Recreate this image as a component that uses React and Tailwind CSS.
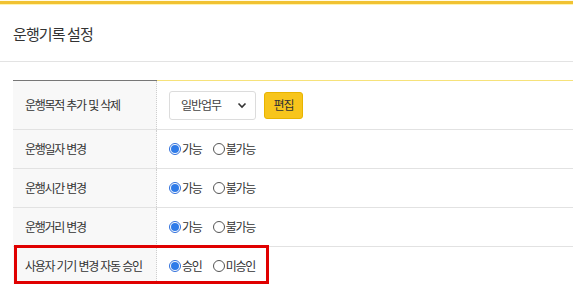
import React, { useState } from "react";

const font = "font-['Noto_Sans_CJK_KR','Noto_Sans',sans-serif]";

function Radio({ checked, label, onClick }) {
  return (
    <label onClick={onClick} className="flex items-center cursor-pointer">
      {checked ? (
        <span className="w-[12px] h-[12px] rounded-full border border-[#2f6fdb] flex items-center justify-center">
          <span className="w-[8px] h-[8px] rounded-full bg-[#2f7be8]" />
        </span>
      ) : (
        <span className="w-[12px] h-[12px] rounded-full border border-[#555]" />
      )}
      <span className="ml-[1px] text-[12px] tracking-[-1.2px] text-[#333] leading-none">{label}</span>
    </label>
  );
}

function RadioPair({ options }) {
  const [value, setValue] = useState(0);
  return (
    <div className="flex items-center gap-[11px]">
      {options.map((o, i) => (
        <Radio key={o} label={o} checked={value === i} onClick={() => setValue(i)} />
      ))}
    </div>
  );
}

function Row({ label, children, tall }) {
  return (
    <div className={"flex border-b border-[#e2e2e2] " + (tall ? "h-[49px]" : "h-[39px]")}>
      <div className="w-[144px] bg-[#f8f8f8] flex items-center pl-[12px] text-[12px] tracking-[-1.3px] [word-spacing:1px] whitespace-nowrap text-[#333] border-r border-dotted border-[#cfcfcf]">
        {label}
      </div>
      <div className="flex-1 flex items-center pl-[12px]">{children}</div>
    </div>
  );
}

export default function App() {
  return (
    <div className={"w-[573px] h-[284px] overflow-hidden bg-white relative " + font}>
      {/* top bar */}
      <div className="h-[1px] bg-[#fffbe8]" />
      <div className="h-[3px] bg-[#f1c232]" />
      <div className="h-[1px] bg-[#fff4b0]" />

      {/* title */}
      <div className="h-[57px] border-b border-[#e3e3e3] flex items-center pl-[13px] pt-[2px]">
        <span className="text-[15px] tracking-[-0.9px] text-[#333]">운행기록 설정</span>
      </div>

      {/* table */}
      <div className="pt-[18px] pl-[13px]">
        <div className="flex h-[1px]">
          <div className="w-[144px] bg-[#777]" />
          <div className="flex-1 bg-[#f6e27a]" />
        </div>
        <Row label="운행목적 추가 및 삭제" tall>
          <div className="w-[87px] h-[29px] border border-[#dcdcdc] rounded-[3px] flex items-center justify-between pl-[11px] pr-[8px] text-[12px] tracking-[-1px] text-[#444]">
            <span>일반업무</span>
            <svg width="10" height="10" viewBox="0 0 10 10">
              <path d="M1.5 3.5 L5 7 L8.5 3.5" fill="none" stroke="#333" strokeWidth="1.6" />
            </svg>
          </div>
          <button className="ml-[8px] w-[39px] h-[27px] bg-[#f7c51c] border border-[#e8b400] rounded-[3px] text-[12px] tracking-[-1px] text-[#333]">
            편집
          </button>
        </Row>
        <Row label="운행일자 변경">
          <RadioPair options={["가능", "불가능"]} />
        </Row>
        <Row label="운행시간 변경">
          <RadioPair options={["가능", "불가능"]} />
        </Row>
        <Row label="운행거리 변경">
          <RadioPair options={["가능", "불가능"]} />
        </Row>
        <Row label="사용자 기기 변경 자동 승인">
          <RadioPair options={["승인", "미승인"]} />
        </Row>
      </div>

      {/* annotation box */}
      <div className="absolute left-[14px] top-[245px] w-[255px] h-[39px] border-[3px] border-[#e00000]" />
    </div>
  );
}
